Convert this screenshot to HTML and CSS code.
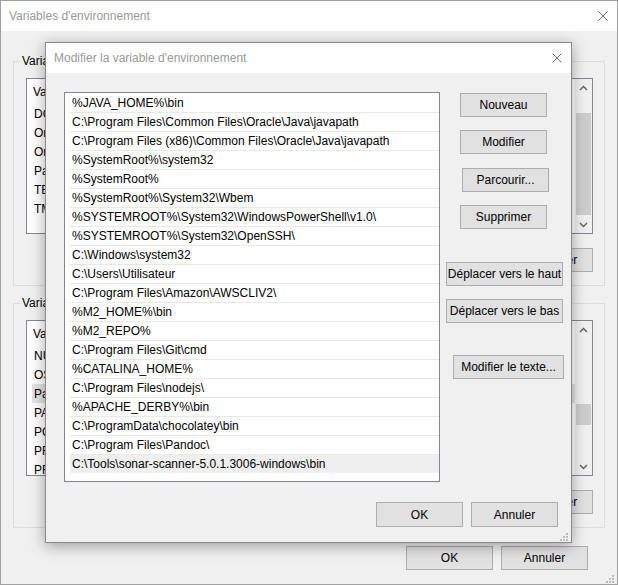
FILE: index.html
```html
<!DOCTYPE html>
<html lang="fr">
<head>
<meta charset="utf-8">
<title>Variables d'environnement</title>
<link rel="stylesheet" href="styles.css">
</head>
<body>
<div class="window">
  <div class="titlebar">
    <span class="title">Variables d'environnement</span>
    <span class="close"><svg width="10" height="10" viewBox="0 0 10 10"><path d="M0.5 0.5 L9.5 9.5 M9.5 0.5 L0.5 9.5" stroke="#6e6e6e" stroke-width="1" fill="none"/></svg></span>
  </div>
  <div class="win-body">
    <fieldset class="group">
      <legend>Variables utilisateur pour Utilisateur</legend>
      <div class="listview">
        <div class="lv-content">
          <div class="lv-header"><span class="col-var">Variable</span></div>
          <div class="lv-row"><span class="col-var">DOCKER_HOST</span></div>
          <div class="lv-row"><span class="col-var">OneDrive</span></div>
          <div class="lv-row"><span class="col-var">OneDriveConsumer</span></div>
          <div class="lv-row"><span class="col-var">Path</span></div>
          <div class="lv-row"><span class="col-var">TEMP</span></div>
          <div class="lv-row"><span class="col-var">TMP</span></div>
        </div>
        <div class="vscroll">
          <div class="sb-arrow"><svg width="9" height="6" viewBox="0 0 9 6"><path d="M1 5 L4.5 1.5 L8 5" fill="none" stroke="#606060" stroke-width="1.4"/></svg></div>
          <div class="sb-track"><div class="sb-thumb" style="margin-top:17px;height:102px"></div></div>
          <div class="sb-arrow"><svg width="9" height="6" viewBox="0 0 9 6"><path d="M1 1 L4.5 4.5 L8 1" fill="none" stroke="#606060" stroke-width="1.4"/></svg></div>
        </div>
      </div>
      <div class="grp-buttons">
        <button class="btn btn-std">Nouveau...</button>
        <button class="btn btn-std">Modifier...</button>
        <button class="btn btn-std">Supprimer</button>
      </div>
    </fieldset>
    <fieldset class="group">
      <legend>Variables système</legend>
      <div class="listview">
        <div class="lv-content">
          <div class="lv-header"><span class="col-var">Variable</span></div>
          <div class="lv-row"><span class="col-var">NUMBER_OF_PROCESSORS</span></div>
          <div class="lv-row"><span class="col-var">OS</span></div>
          <div class="lv-row selected"><span class="col-var">Path</span></div>
          <div class="lv-row"><span class="col-var">PATHEXT</span></div>
          <div class="lv-row"><span class="col-var">POWERSHELL_DISTRIBUTION_CHANNEL</span></div>
          <div class="lv-row"><span class="col-var">PROCESSOR_ARCHITECTURE</span></div>
          <div class="lv-row"><span class="col-var">PROCESSOR_IDENTIFIER</span></div>
        </div>
        <div class="vscroll">
          <div class="sb-arrow"><svg width="9" height="6" viewBox="0 0 9 6"><path d="M1 5 L4.5 1.5 L8 5" fill="none" stroke="#606060" stroke-width="1.4"/></svg></div>
          <div class="sb-track"><div class="sb-thumb" style="margin-top:66px;height:21px"></div></div>
          <div class="sb-arrow"><svg width="9" height="6" viewBox="0 0 9 6"><path d="M1 1 L4.5 4.5 L8 1" fill="none" stroke="#606060" stroke-width="1.4"/></svg></div>
        </div>
      </div>
      <div class="grp-buttons">
        <button class="btn btn-std">Nouveau...</button>
        <button class="btn btn-std">Modifier...</button>
        <button class="btn btn-std">Supprimer</button>
      </div>
    </fieldset>
    <div class="win-footer">
      <button class="btn btn-std">OK</button>
      <button class="btn btn-std">Annuler</button>
    </div>
  </div>
  <svg class="grip grip-win" width="8" height="8" viewBox="0 0 8 8"><g fill="#bcbcbc"><rect x="6" y="0" width="2" height="2"/><rect x="3" y="3" width="2" height="2"/><rect x="6" y="3" width="2" height="2"/><rect x="0" y="6" width="2" height="2"/><rect x="3" y="6" width="2" height="2"/><rect x="6" y="6" width="2" height="2"/></g></svg>
</div>

<div class="dialog">
  <div class="titlebar dlg-titlebar">
    <span class="title">Modifier la variable d'environnement</span>
    <span class="close"><svg width="10" height="10" viewBox="0 0 10 10"><path d="M0.5 0.5 L9.5 9.5 M9.5 0.5 L0.5 9.5" stroke="#6e6e6e" stroke-width="1" fill="none"/></svg></span>
  </div>
  <div class="dlg-body">
    <div class="dlg-main">
      <div class="pathlist">
        <div class="path">%JAVA_HOME%\bin</div>
        <div class="path">C:\Program Files\Common Files\Oracle\Java\javapath</div>
        <div class="path">C:\Program Files (x86)\Common Files\Oracle\Java\javapath</div>
        <div class="path">%SystemRoot%\system32</div>
        <div class="path">%SystemRoot%</div>
        <div class="path">%SystemRoot%\System32\Wbem</div>
        <div class="path">%SYSTEMROOT%\System32\WindowsPowerShell\v1.0\</div>
        <div class="path">%SYSTEMROOT%\System32\OpenSSH\</div>
        <div class="path">C:\Windows\system32</div>
        <div class="path">C:\Users\Utilisateur</div>
        <div class="path">C:\Program Files\Amazon\AWSCLIV2\</div>
        <div class="path">%M2_HOME%\bin</div>
        <div class="path">%M2_REPO%</div>
        <div class="path">C:\Program Files\Git\cmd</div>
        <div class="path">%CATALINA_HOME%</div>
        <div class="path">C:\Program Files\nodejs\</div>
        <div class="path">%APACHE_DERBY%\bin</div>
        <div class="path">C:\ProgramData\chocolatey\bin</div>
        <div class="path">C:\Program Files\Pandoc\</div>
        <div class="path current">C:\Tools\sonar-scanner-5.0.1.3006-windows\bin</div>
      </div>
      <div class="dlg-buttons">
        <button class="btn btn-std b-nouveau">Nouveau</button>
        <button class="btn btn-std b-modifier">Modifier</button>
        <button class="btn btn-std b-parcourir">Parcourir...</button>
        <button class="btn btn-std b-supprimer">Supprimer</button>
        <button class="btn btn-move b-haut">Déplacer vers le haut</button>
        <button class="btn btn-move b-bas">Déplacer vers le bas</button>
        <button class="btn btn-text b-texte">Modifier le texte...</button>
      </div>
    </div>
    <div class="dlg-footer">
      <button class="btn btn-std btn-tall">OK</button>
      <button class="btn btn-std btn-tall">Annuler</button>
    </div>
  </div>
  <svg class="grip grip-dlg" width="8" height="8" viewBox="0 0 8 8"><g fill="#bcbcbc"><rect x="6" y="0" width="2" height="2"/><rect x="3" y="3" width="2" height="2"/><rect x="6" y="3" width="2" height="2"/><rect x="0" y="6" width="2" height="2"/><rect x="3" y="6" width="2" height="2"/><rect x="6" y="6" width="2" height="2"/></g></svg>
</div>
</body>
</html>
```
FILE: styles.css
```css
* { box-sizing: border-box; }
html, body { margin: 0; padding: 0; }
body {
  width: 618px;
  height: 585px;
  overflow: hidden;
  position: relative;
  background: #f0f0f0;
  font: 12px/14px "Liberation Sans", Arial, sans-serif;
  color: #000;
}

/* ---------- background window ---------- */
.window {
  width: 618px;
  height: 585px;
  border: 1px solid #a0a0a0;
  background: #f0f0f0;
  display: flex;
  flex-direction: column;
  position: relative;
}
.titlebar {
  height: 30px;
  flex: none;
  background: #fff;
  display: flex;
  align-items: center;
  justify-content: space-between;
  padding: 0 9px 0 8px;
}
.title { color: #999; white-space: nowrap; }
.close { display: flex; width: 10px; height: 10px; }

.win-body {
  padding: 23px 12px 0 12px;
  display: flex;
  flex-direction: column;
}
.group {
  margin: 0;
  min-width: 0;
  border: 1px solid #dcdcdc;
  padding: 10px 11px 13px 6px;
}
.group + .group { margin-top: 10px; }
.group legend { padding: 0 2px; line-height: 14px; }

.listview {
  margin-left: 6px;
  height: 156px;
  border: 1px solid #828790;
  background: #fff;
  display: flex;
}
.lv-content { flex: 1; min-width: 0; overflow: hidden; }
.lv-header {
  height: 25px;
  display: flex;
  align-items: center;
  padding-left: 6px;
  white-space: nowrap;
}
.lv-row {
  height: 19px;
  margin-left: 5px;
  padding-left: 2px;
  display: flex;
  align-items: center;
  white-space: nowrap;
}
.lv-row.selected { background: #e3e3e3; }
.col-var { width: 200px; flex: none; overflow: hidden; }

.vscroll {
  width: 17px;
  flex: none;
  background: #f0f0f0;
  display: flex;
  flex-direction: column;
}
.sb-arrow {
  height: 17px;
  flex: none;
  display: flex;
  align-items: center;
  justify-content: center;
}
.sb-track { flex: 1; padding: 0 1px; }
.sb-thumb { background: #cdcdcd; }

.grp-buttons {
  display: flex;
  justify-content: flex-end;
  gap: 8px;
  margin-top: 14px;
}
.win-footer {
  display: flex;
  justify-content: flex-end;
  gap: 8px;
  margin-top: 18px;
  padding-right: 17px;
}

.btn {
  height: 24px;
  padding: 0;
  background: #e1e1e1;
  border: 1px solid #adadad;
  font: inherit;
  color: #000;
  flex: none;
  white-space: nowrap;
}
.btn-std { width: 87px; }
.btn-tall { height: 25px; }
.btn-move { width: 117px; }
.btn-text { width: 111px; }

.grip { position: absolute; display: block; }
.grip-win { right: 3px; bottom: 1px; }
.grip-dlg { right: 3px; bottom: 1px; }

/* ---------- dialog ---------- */
.dialog {
  position: absolute;
  left: 45px;
  top: 42px;
  width: 527px;
  height: 501px;
  border: 1px solid #8a8a8a;
  background: #f0f0f0;
  box-shadow: 0 3px 14px rgba(0, 0, 0, 0.35);
  display: flex;
  flex-direction: column;
}
.dlg-body {
  flex: 1;
  padding: 19px 0 15px 18px;
  display: flex;
  flex-direction: column;
}
.dlg-main { display: flex; }
.pathlist {
  width: 376px;
  height: 390px;
  flex: none;
  border: 1px solid #828790;
  background: #fff;
  padding-left: 5px;
  overflow: hidden;
}
.path {
  height: 19px;
  border-top: 1px solid #e8e8e8;
  padding-left: 2px;
  display: flex;
  align-items: center;
  white-space: nowrap;
}
.path:first-child { border-top-color: transparent; }
.path.current { background: #efefef; }

.dlg-buttons {
  margin-left: 6px;
  display: flex;
  flex-direction: column;
  align-items: flex-start;
}
.b-nouveau { margin: 1px 0 0 14px; }
.b-modifier { margin: 13px 0 0 14px; }
.b-parcourir { margin: 14px 0 0 16px; }
.b-supprimer { margin: 13px 0 0 14px; }
.b-haut { margin-top: 33px; }
.b-bas { margin-top: 13px; }
.b-texte { margin: 32px 0 0 7px; }

.dlg-footer {
  display: flex;
  justify-content: flex-end;
  gap: 8px;
  margin-top: 20px;
  padding-right: 13px;
}
```
